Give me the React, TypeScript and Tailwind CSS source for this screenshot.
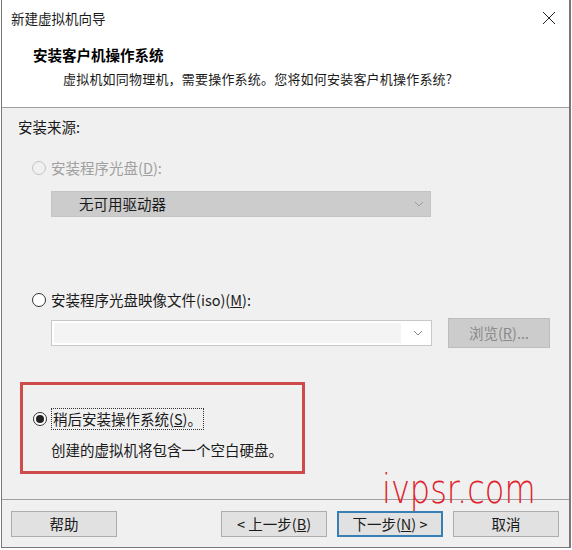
import React from "react";

const font = "font-['Noto_Sans_CJK_SC','Noto_Sans',sans-serif]";

function Radio({ checked, disabled }: { checked?: boolean; disabled?: boolean }) {
  return (
    <span
      className={`w-[14px] h-[14px] rounded-full border flex items-center justify-center shrink-0 ${
        disabled ? "border-[#c4c4c4] bg-[#f0f0f0]" : "border-[#333333] bg-white"
      }`}
    >
      {checked && <span className="w-[8px] h-[8px] rounded-full bg-[#222222]" />}
    </span>
  );
}

function Chevron({ color }: { color: string }) {
  return (
    <svg width="10" height="6" viewBox="0 0 10 6">
      <path d="M1 1 L5 5 L9 1" fill="none" stroke={color} strokeWidth="1" />
    </svg>
  );
}

function Btn({ children, focused }: { children: React.ReactNode; focused?: boolean }) {
  return (
    <div
      className={`w-[106px] h-[26px] flex items-center justify-center text-[14.5px] leading-[18px] text-[#1a1a1a] bg-[#e1e1e1] ${
        focused ? "border-2 border-[#3a7fb3]" : "border border-[#adadad]"
      }`}
    >
      {children}
    </div>
  );
}

export default function App() {
  return (
    <div className={`relative w-[572px] h-[550px] bg-white ${font}`}>
      <div className="ml-[1px] w-[570px] h-[548px] border-l border-r-2 border-b border-[#777777] flex flex-col">
        {/* title bar */}
        <div className="h-[35px] bg-white flex items-center justify-between pl-[9px] pr-[13px]">
          <span className="text-[13.5px] leading-[18px] text-[#1a1a1a]">新建虚拟机向导</span>
          <svg width="14" height="14" viewBox="0 0 14 14">
            <path d="M1 1 L13 13 M13 1 L1 13" stroke="#222" strokeWidth="1" />
          </svg>
        </div>

        {/* header */}
        <div className="h-[73px] bg-white border-b border-[#a0a0a0] pt-[10px]">
          <div className="pl-[31px] text-[14.5px] leading-[20px] font-bold text-black">安装客户机操作系统</div>
          <div className="pl-[61px] mt-[4px] text-[13px] tracking-[0.2px] leading-[20px] text-[#1a1a1a]">
            虚拟机如同物理机，需要操作系统。您将如何安装客户机操作系统?
          </div>
        </div>

        {/* body */}
        <div className="h-[392px] bg-[#f0f0f0] border-b border-[#a0a0a0] pt-[10px] text-[14.5px] leading-[18px] text-[#1a1a1a]">
          <div className="pl-[16px]">安装来源:</div>

          <div className="mt-[23px] pl-[30px] flex items-center gap-[5px] text-[#a0a0a0]">
            <Radio disabled />
            <span>
              安装程序光盘(<span className="underline">D</span>):
            </span>
          </div>

          <div className="mt-[14px] ml-[49px] w-[380px] h-[26px] bg-[#cccccc] border border-[#c4c4c4] flex items-center justify-between pl-[27px] pr-[6px]">
            <span className="text-[#1a1a1a]">无可用驱动器</span>
            <Chevron color="#9a9a9a" />
          </div>

          <div className="mt-[74px] pl-[30px] flex items-center gap-[5px]">
            <Radio />
            <span>
              安装程序光盘映像文件(iso)(<span className="underline">M</span>):
            </span>
          </div>

          <div className="mt-[9px] ml-[49px] flex items-center">
            <div className="w-[381px] h-[26px] bg-white border border-[#c8c8c8] flex items-center p-[2px] pr-[8px]">
              <div className="flex-1 h-full bg-[#f4f4f4] mr-[12px]" />
              <Chevron color="#8a8a8a" />
            </div>
            <div className="ml-[16px] w-[102px] h-[30px] bg-[#cccccc] border border-[#bdbdbd] flex items-center justify-center text-[#8a8a8a]">
              浏览(<span className="underline">R</span>)...
            </div>
          </div>

          <div className="mt-[34px] ml-[18px] w-[285px] h-[92px] border-[3px] border-[#cf4b4b] pt-[23px]">
            <div className="pl-[10px] flex items-center gap-[4px]">
              <Radio checked />
              <span className="border border-dotted border-[#333] px-[1px] leading-[20px]">
                稍后安装操作系统(<span className="underline">S</span>)。
              </span>
            </div>
            <div className="pl-[28px] mt-[11px]">创建的虚拟机将包含一个空白硬盘。</div>
          </div>
        </div>

        {/* footer */}
        <div className="flex-1 bg-[#f0f0f0] flex items-start pt-[11px] pl-[9px]">
          <Btn>帮助</Btn>
          <div className="ml-[104px]">
            <Btn>
              &lt; 上一步(<span className="underline">B</span>)
            </Btn>
          </div>
          <div className="ml-[10px]">
            <Btn focused>
              下一步(<span className="underline">N</span>) &gt;
            </Btn>
          </div>
          <div className="ml-[10px]">
            <Btn>取消</Btn>
          </div>
        </div>
      </div>

      {/* watermark */}
      <div className="absolute left-[382px] top-[469px] font-['DejaVu_Sans',sans-serif] font-extralight text-[32px] leading-[32px] text-[#e0202c] scale-y-[1.27] origin-top whitespace-nowrap">
        ivpsr.com
      </div>
    </div>
  );
}
